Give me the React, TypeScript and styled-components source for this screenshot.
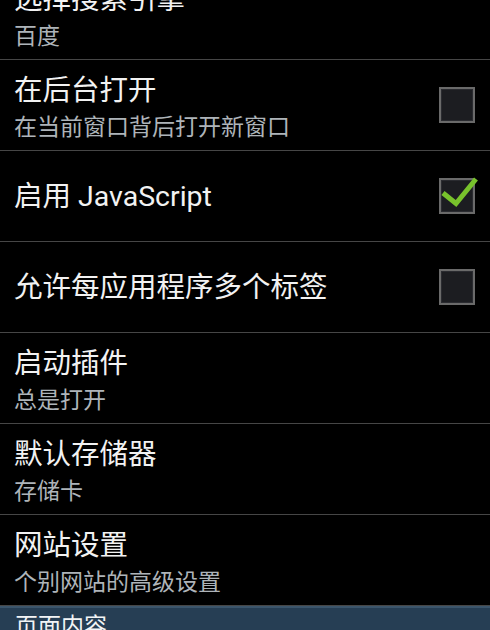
import React from "react";
import styled, { createGlobalStyle } from "styled-components";

const GlobalStyle = createGlobalStyle`
  html, body {
    margin: 0;
    padding: 0;
    background: #000;
    height: 630px;
    overflow: hidden;
  }
  body {
    font-family: "Roboto", "Noto Sans CJK SC", sans-serif;
    -webkit-font-smoothing: antialiased;
  }
`;

const Screen = styled.div`
  width: 490px;
  height: 630px;
  overflow: hidden;
  background: #000;
`;

const List = styled.div`
  display: flex;
  flex-direction: column;
  margin-top: -31px;
`;

const Row = styled.div`
  display: flex;
  align-items: center;
  height: 91px;
  box-sizing: border-box;
  border-bottom: 1px solid #464646;
  padding: 0 15px 0 14px;
`;

const TextBlock = styled.div<{ $twoLine: boolean }>`
  flex: 1;
  display: flex;
  flex-direction: column;
  padding-top: ${(p) => (p.$twoLine ? "7px" : "2px")};
  min-width: 0;
`;

const Title = styled.div`
  color: #f2f2f2;
  font-size: 28.5px;
  line-height: 38px;
  white-space: nowrap;
`;

const Summary = styled.div`
  color: #aeb4b9;
  font-size: 23px;
  line-height: 36px;
  white-space: nowrap;
`;

const CheckBox = styled.div`
  position: relative;
  flex: none;
  width: 36px;
  height: 36px;
  box-sizing: border-box;
  border: 2px solid #6a6a6a;
  background: #1c1d21;
  box-shadow: inset 0 0 0 1px #2a2b30;
`;

const CheckMark = styled.svg`
  position: absolute;
  left: -2px;
  top: -2px;
  width: 36px;
  height: 36px;
  overflow: visible;
`;

const SectionHeader = styled.div`
  height: 40px;
  box-sizing: border-box;
  background: #263e54;
  border-top: 2px solid #3b556b;
  padding: 3px 0 0 15px;
  color: #f2f4f6;
  font-size: 23px;
  line-height: 32px;
`;

type Item = {
  title: string;
  summary?: string;
  check?: boolean;
};

const items: Item[] = [
  { title: "选择搜索引擎", summary: "百度" },
  { title: "在后台打开", summary: "在当前窗口背后打开新窗口", check: false },
  { title: "启用 JavaScript", check: true },
  { title: "允许每应用程序多个标签", check: false },
  { title: "启动插件", summary: "总是打开" },
  { title: "默认存储器", summary: "存储卡" },
  { title: "网站设置", summary: "个别网站的高级设置" },
];

export default function App() {
  return (
    <Screen>
      <GlobalStyle />
      <List>
        {items.map((it) => (
          <Row key={it.title}>
            <TextBlock $twoLine={!!it.summary}>
              <Title>{it.title}</Title>
              {it.summary && <Summary>{it.summary}</Summary>}
            </TextBlock>
            {it.check !== undefined && (
              <CheckBox>
                {it.check && (
                  <CheckMark viewBox="0 0 36 36">
                    <polyline
                      points="4,15 17,25.5 37,1"
                      fill="none"
                      stroke="#78c22c"
                      strokeWidth="5"
                      strokeLinecap="butt"
                      strokeLinejoin="miter"
                    />
                  </CheckMark>
                )}
              </CheckBox>
            )}
          </Row>
        ))}
      </List>
      <SectionHeader>页面内容</SectionHeader>
    </Screen>
  );
}
